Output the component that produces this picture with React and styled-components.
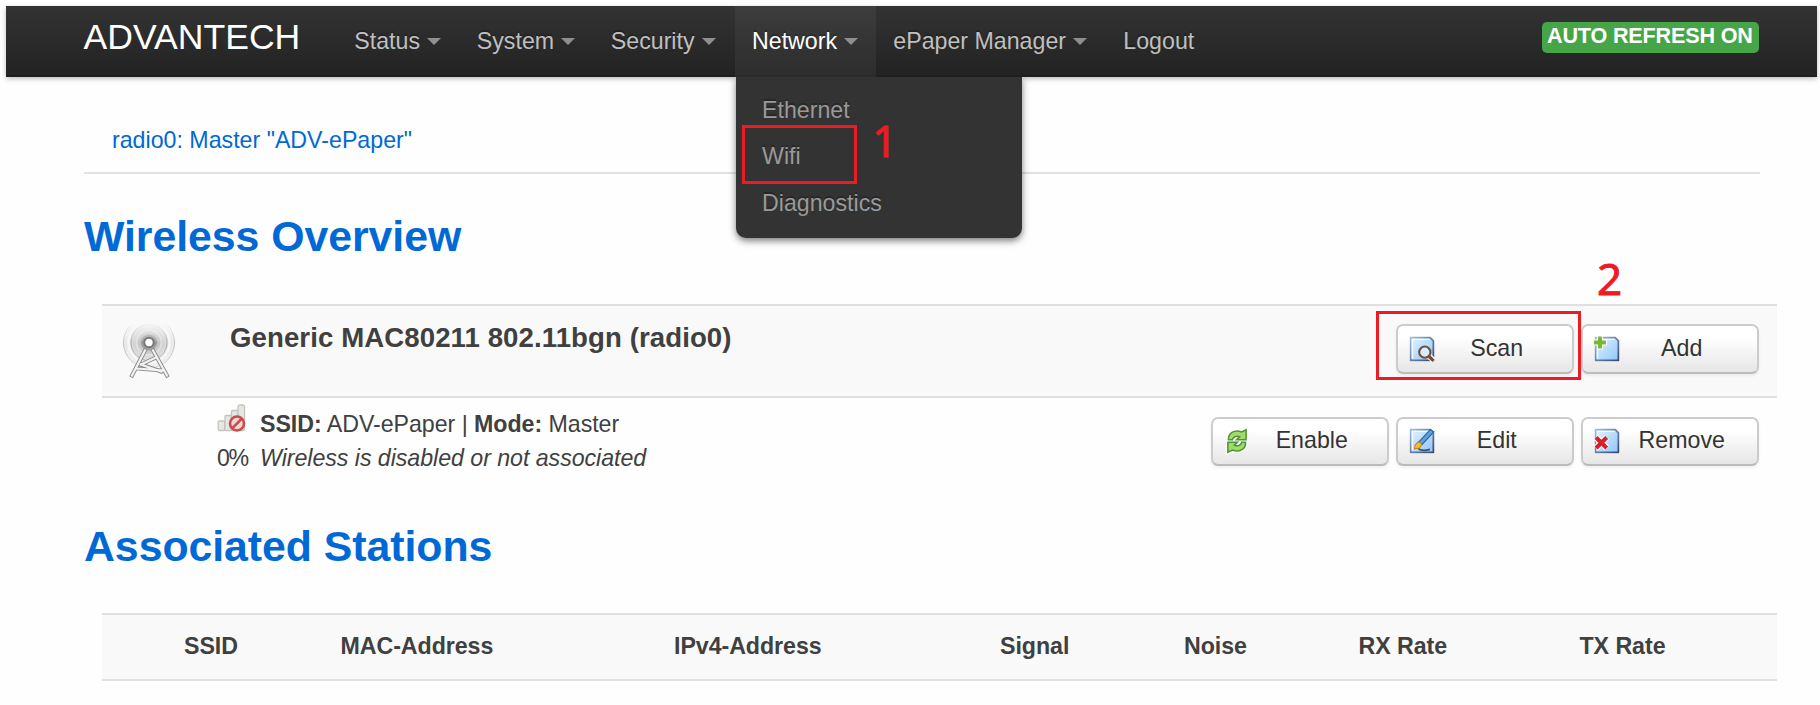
import React from "react";
import styled, { createGlobalStyle } from "styled-components";

const GlobalStyle = createGlobalStyle`
  *, *::before, *::after { box-sizing: border-box; }
  body {
    margin: 0;
    background: #fefefe;
    color: #404040;
    font-family: "Liberation Sans", Arial, sans-serif;
    font-size: 23.2px;
    line-height: 34px;
    overflow: hidden;
  }
  h2, h3, p, nav, ul { margin: 0; padding: 0; }
`;

const Page = styled.div`
  width: 1820px;
  height: 705px;
  padding: 6px 3px 0 6px;
  overflow: hidden;
`;

const TopBar = styled.header`
  display: flex;
  align-items: flex-start;
  height: 71px;
  padding: 0 58px 0 77.5px;
  background: linear-gradient(#333, #222);
  box-shadow: 0 2px 5px rgba(0, 0, 0, 0.25), inset 0 -2px 0 rgba(0, 0, 0, 0.1);
`;

const Brand = styled.span`
  width: 253px;
  padding-top: 13px;
  color: #fff;
  font-size: 35.6px;
  line-height: 36px;
`;

const Menu = styled.nav`
  display: flex;
  flex: 1;
`;

const MenuItem = styled.div`
  position: relative;
  display: flex;
  align-items: center;
  height: 71px;
  width: ${(p) => p.$width}px;
  padding: 0 0 2px ${(p) => (p.$active ? 17 : 17.8)}px;
  color: ${(p) => (p.$active ? "#fff" : "#bfbfbf")};
  background: ${(p) => (p.$active ? "rgba(255, 255, 255, 0.05)" : "none")};
  text-shadow: 0 -2px 0 rgba(0, 0, 0, 0.25);
  white-space: nowrap;
`;

const Caret = styled.i`
  margin: 2px 0 0 7px;
  border: 7px solid transparent;
  border-top-color: #8f8f8f;
  border-bottom: 0;
`;

const Dropdown = styled.div`
  position: absolute;
  z-index: 2;
  top: 71px;
  left: 1px;
  width: 286px;
  height: 161px;
  padding: 10px 26px;
  background: #333;
  border-radius: 0 0 10px 10px;
  box-shadow: 0 3px 7px rgba(0, 0, 0, 0.5);
  clip-path: inset(0 -14px -16px -14px);
`;

const DropdownItem = styled.div`
  height: 46.4px;
  line-height: 46.4px;
  color: #999;
`;

const RefreshBadge = styled.span`
  width: 217px;
  height: 31px;
  margin-top: 16px;
  padding-left: 5px;
  border-radius: 5px;
  background: #46a546;
  color: #fff;
  font-size: 21.6px;
  font-weight: bold;
  line-height: 28px;
  letter-spacing: -0.18px;
  white-space: nowrap;
`;

const Content = styled.main`
  padding: 31px 57px 0 78px;
`;

const Tabs = styled.div`
  height: 65.5px;
  padding-left: 28px;
  border-bottom: 2px solid #e1e1e1;
  color: #0069d6;
  line-height: 64px;
`;

const Heading = styled.h2`
  margin-top: ${(p) => p.$top}px;
  color: #0069d6;
  font-size: 42.8px;
  line-height: 64px;
  letter-spacing: -0.04px;
`;

const Table = styled.section`
  width: 1675px;
  margin: ${(p) => p.$top}px 0 0 18px;
`;

const DeviceRow = styled.div`
  display: flex;
  height: 94px;
  padding: 18px 18.5px 0 19px;
  border: solid #e0e0e0;
  border-width: 2px 0;
  background: #f9f9f9;
`;

const DeviceName = styled.h3`
  flex: 1;
  margin-left: 53px;
  font-size: 27.6px;
  line-height: 28px;
  letter-spacing: 0.09px;
`;

const NetworkRow = styled.div`
  display: flex;
  height: 85px;
  padding: 6px 18.5px 0 115px;
`;

const SignalCell = styled.div`
  display: flex;
  flex-direction: column;
  width: 43px;

  svg { display: block; margin-bottom: 15.5px; }
  span { line-height: 20px; letter-spacing: -1.4px; }
`;

const NetworkInfo = styled.div`
  flex: 1;
  padding-top: 2.5px;
  line-height: 34px;
`;

const InfoLine = styled.p`
  letter-spacing: -0.04px;
  font-style: ${(p) => (p.$italic ? "italic" : "normal")};
`;

const Actions = styled.div`
  display: flex;
  gap: 7.5px;
  padding-top: ${(p) => p.$top || 0}px;
`;

const ActionButton = styled.button`
  display: flex;
  align-items: center;
  width: 177.5px;
  height: 49.5px;
  padding: 0 14px 2px 10px;
  border: 2px solid #ccc;
  border-bottom-color: #bbb;
  border-radius: 7px;
  background: linear-gradient(#fff 25%, #e6e6e6);
  box-shadow: 0 2px 3px rgba(0, 0, 0, 0.06);
  color: #333;
  font: inherit;

  svg { flex: none; margin-top: 2px; }
  span { flex: 1; text-align: center; }
`;

const StationHeader = styled.div`
  display: grid;
  grid-template-columns: 156.5px 333.5px 326px 184px 174.5px 221px 1fr;
  height: 68px;
  padding-left: 82px;
  border: solid #e0e0e0;
  border-width: 2px 0;
  background: #f9f9f9;
  font-weight: bold;
  line-height: 63px;
`;

const StationColumn = styled.span`
  letter-spacing: -0.05px;
  white-space: nowrap;
`;

const Marker = styled.div`
  position: absolute;
  z-index: 3;
  left: ${(p) => p.$x}px;
  top: ${(p) => p.$y}px;
  width: ${(p) => p.$w}px;
  height: ${(p) => p.$h}px;
  border: 3px solid #ed1c24;
`;

const StepNumber = styled.div`
  position: absolute;
  z-index: 3;
  left: ${(p) => p.$x}px;
  top: ${(p) => p.$y}px;
  color: #ed1c24;
  font-family: "Noto Sans", "Open Sans", sans-serif;
  font-size: 44px;
  line-height: 50px;
  -webkit-text-stroke: 0.9px #ed1c24;
`;

const Icon = ({ children }) => (
  <svg width="28" height="28" viewBox="0 0 16 16">{children}</svg>
);

const PageShape = () => (
  <>
    <defs>
      <linearGradient id="sheet" x1="0" y1="0" x2="1" y2="1">
        <stop offset="0" stopColor="#e4f3ff" />
        <stop offset="1" stopColor="#8fc6fb" />
      </linearGradient>
      <linearGradient id="edge" x1="0" y1="0" x2="1" y2="1">
        <stop offset="0" stopColor="#9cbce0" />
        <stop offset="1" stopColor="#36486e" />
      </linearGradient>
    </defs>
    <path d="M.6.6h12.6l2.2 2.2v12.6H.6z" fill="#fff" opacity=".85" />
    <path d="M1.5 1.5h11.2l1.8 1.8v11.2h-13z" fill="url(#sheet)" stroke="url(#edge)" strokeWidth="1" />
    <path d="M2.5 13.5v-11h9.8" fill="none" stroke="#fff" strokeWidth=".8" opacity=".8" />
  </>
);

const ScanIcon = () => (
  <Icon>
    <PageShape />
    <path d="M11.5 11.5l3.2 3.2" stroke="#fff" strokeWidth="3.2" />
    <circle cx="9.6" cy="9.8" r="3.2" fill="#d9ecfb" stroke="#70503c" strokeWidth="1.2" />
    <path d="M12 12.2l2.6 2.6" stroke="#7c4a2c" strokeWidth="1.9" />
  </Icon>
);

const AddIcon = () => (
  <Icon>
    <PageShape />
    <path d="M2.3.3h3.4v2.3H8V6H5.7v2.3H2.3V6H0V2.6h2.3z" fill="#fff" />
    <path d="M2.9.9h2.2v2.3h2.3v2.2H5.1v2.3H2.9V5.4H.6V3.2h2.3z" fill="#78b82e" />
  </Icon>
);

const EditIcon = () => (
  <Icon>
    <PageShape />
    <path d="M5.5 11.8c1.500 2 4.500 1.700 7 1" fill="none" stroke="#3d5272" strokeWidth="1" />
    <path d="M12.8 1.4l1.9 1.4-6.9 7.5L6 8.800z" fill="#5ba3e6" stroke="#325f9c" strokeWidth=".7" />
    <path d="M6.1 8.2L8 10.100 6.400 12l-2.700.5.4-2.200z" fill="#f5bd35" stroke="#c18c20" strokeWidth=".6" />
  </Icon>
);

const RemoveIcon = () => (
  <Icon>
    <PageShape />
    <path d="M1.8 6l6 6M7.8 6l-6 6" stroke="#fff" strokeWidth="3.6" />
    <path d="M1.8 6l6 6M7.8 6l-6 6" stroke="#d71f25" strokeWidth="2.4" />
  </Icon>
);

const arrowTop = "M3.100 7.300C2.800 3.600 6.400 1.200 10.600 2.800l2.600-1.200v5.700H7.800l1.700-1.700C7.400 4.900 5.900 5.500 5.300 7.300z";
const arrowBottom = "M12.900 8.700C13.200 12.400 9.600 14.800 5.400 13.200l-2.600 1.200V8.700h5.400l-1.700 1.700c2.100.7 3.600.1 4.200-1.700z";

const EnableIcon = () => (
  <Icon>
    <g stroke="#fff" strokeWidth="2.4" fill="#fff">
      <path d={arrowTop} />
      <path d={arrowBottom} />
    </g>
    <g stroke="#4f9535" strokeWidth=".9" fill="#a2dc68">
      <path d={arrowTop} />
      <path d={arrowBottom} />
    </g>
  </Icon>
);

const TowerIcon = () => (
  <svg width="56" height="58" viewBox="0 1.5 56 58">
    <defs>
      <radialGradient id="glow">
        <stop offset="0" stopColor="#8c8c8c" />
        <stop offset=".4" stopColor="#b5b5b5" />
        <stop offset="1" stopColor="#eee" />
      </radialGradient>
      <linearGradient id="fade" x1="0" y1="0" x2="0" y2="1">
        <stop offset="0" stopColor="#fff" stopOpacity="0" />
        <stop offset=".35" stopColor="#fff" />
        <stop offset=".7" stopColor="#fff" stopOpacity=".7" />
        <stop offset="1" stopColor="#fff" stopOpacity="0" />
      </linearGradient>
      <mask id="waves"><rect width="56" height="58" fill="url(#fade)" /></mask>
    </defs>
    <g mask="url(#waves)">
      <circle cx="28" cy="20" r="26" fill="url(#glow)" opacity=".75" />
      <circle cx="28" cy="20" r="25.5" fill="none" stroke="#bcbcbc" />
      <circle cx="28" cy="20" r="20.5" fill="none" stroke="#f6f6f6" strokeWidth="2.5" />
      <circle cx="28" cy="20" r="18" fill="none" stroke="#aaa" />
      <circle cx="28" cy="20" r="12.5" fill="none" stroke="#dedede" strokeWidth="2" />
      <circle cx="28" cy="20" r="8" fill="#999" />
    </g>
    <g fill="none" strokeLinecap="square">
      <path d="M24 28L11 53M32 28l14 25M20 42l15-7M20 42l20 7M16 46l26 2" stroke="#8a8a8a" strokeWidth="4" />
      <path d="M24 28L11 53M32 28l14 25M20 42l15-7M20 42l20 7M16 46l26 2" stroke="#f2f2f2" strokeWidth="2.2" />
    </g>
    <circle cx="28" cy="20" r="4.7" fill="#fff" stroke="#777" strokeWidth="2" />
  </svg>
);

const SignalIcon = () => (
  <svg width="30" height="28" viewBox="0 0 30 28">
    <g fill="#e6e6e3" stroke="#c3c3c0" strokeWidth="1.3">
      <rect x="1.2" y="17" width="6.5" height="9.5" rx="1" />
      <rect x="8" y="11.5" width="6.5" height="15" rx="1" />
      <rect x="14.5" y="6.5" width="6.5" height="20" rx="1" />
      <rect x="21" y="1" width="6.5" height="25.5" rx="2" />
    </g>
    <circle cx="20" cy="19.5" r="7" fill="#eed8d6" stroke="#c94b4b" strokeWidth="2.6" />
    <path d="M15.4 24.100l9.200-9.200" stroke="#c94b4b" strokeWidth="2.6" />
  </svg>
);

const menu = [
  { label: "Status", width: 122.5 },
  { label: "System", width: 134 },
  { label: "Security", width: 142 },
  {
    label: "Network", width: 140.5, active: true,
    items: ["Ethernet", "Wifi", "Diagnostics"],
  },
  { label: "ePaper Manager", width: 230 },
  { label: "Logout", width: 107, plain: true },
];

const columns = ["SSID", "MAC-Address", "IPv4-Address", "Signal", "Noise", "RX Rate", "TX Rate"];

const Action = ({ icon, label }) => (
  <ActionButton type="button">
    {icon}
    <span>{label}</span>
  </ActionButton>
);

export default function App() {
  return (
    <Page>
      <GlobalStyle />
      <TopBar>
        <Brand>ADVANTECH</Brand>
        <Menu>
          {menu.map((m) => (
            <MenuItem key={m.label} $width={m.width} $active={m.active}>
              {m.label}
              {!m.plain && <Caret />}
              {m.items && (
                <Dropdown>
                  {m.items.map((d) => (
                    <DropdownItem key={d}>{d}</DropdownItem>
                  ))}
                </Dropdown>
              )}
            </MenuItem>
          ))}
        </Menu>
        <RefreshBadge>AUTO REFRESH ON</RefreshBadge>
      </TopBar>
      <Content>
        <Tabs>radio0: Master "ADV-ePaper"</Tabs>
        <Heading $top={30.5}>Wireless Overview</Heading>
        <Table $top={36}>
          <DeviceRow>
            <TowerIcon />
            <DeviceName>Generic MAC80211 802.11bgn (radio0)</DeviceName>
            <Actions>
              <Action icon={<ScanIcon />} label="Scan" />
              <Action icon={<AddIcon />} label="Add" />
            </Actions>
          </DeviceRow>
          <NetworkRow>
            <SignalCell>
              <SignalIcon />
              <span>0%</span>
            </SignalCell>
            <NetworkInfo>
              <InfoLine><b>SSID:</b> ADV-ePaper | <b>Mode:</b> Master</InfoLine>
              <InfoLine $italic>Wireless is disabled or not associated</InfoLine>
            </NetworkInfo>
            <Actions $top={12.5}>
              <Action icon={<EnableIcon />} label="Enable" />
              <Action icon={<EditIcon />} label="Edit" />
              <Action icon={<RemoveIcon />} label="Remove" />
            </Actions>
          </NetworkRow>
        </Table>
        <Heading $top={31}>Associated Stations</Heading>
        <Table $top={34.5}>
          <StationHeader>
            {columns.map((c) => (
              <StationColumn key={c}>{c}</StationColumn>
            ))}
          </StationHeader>
        </Table>
      </Content>
      <Marker $x={742} $y={125} $w={115} $h={59} />
      <StepNumber $x={872} $y={115}>1</StepNumber>
      <Marker $x={1376} $y={311} $w={205} $h={69} />
      <StepNumber $x={1597} $y={253}>2</StepNumber>
    </Page>
  );
}
